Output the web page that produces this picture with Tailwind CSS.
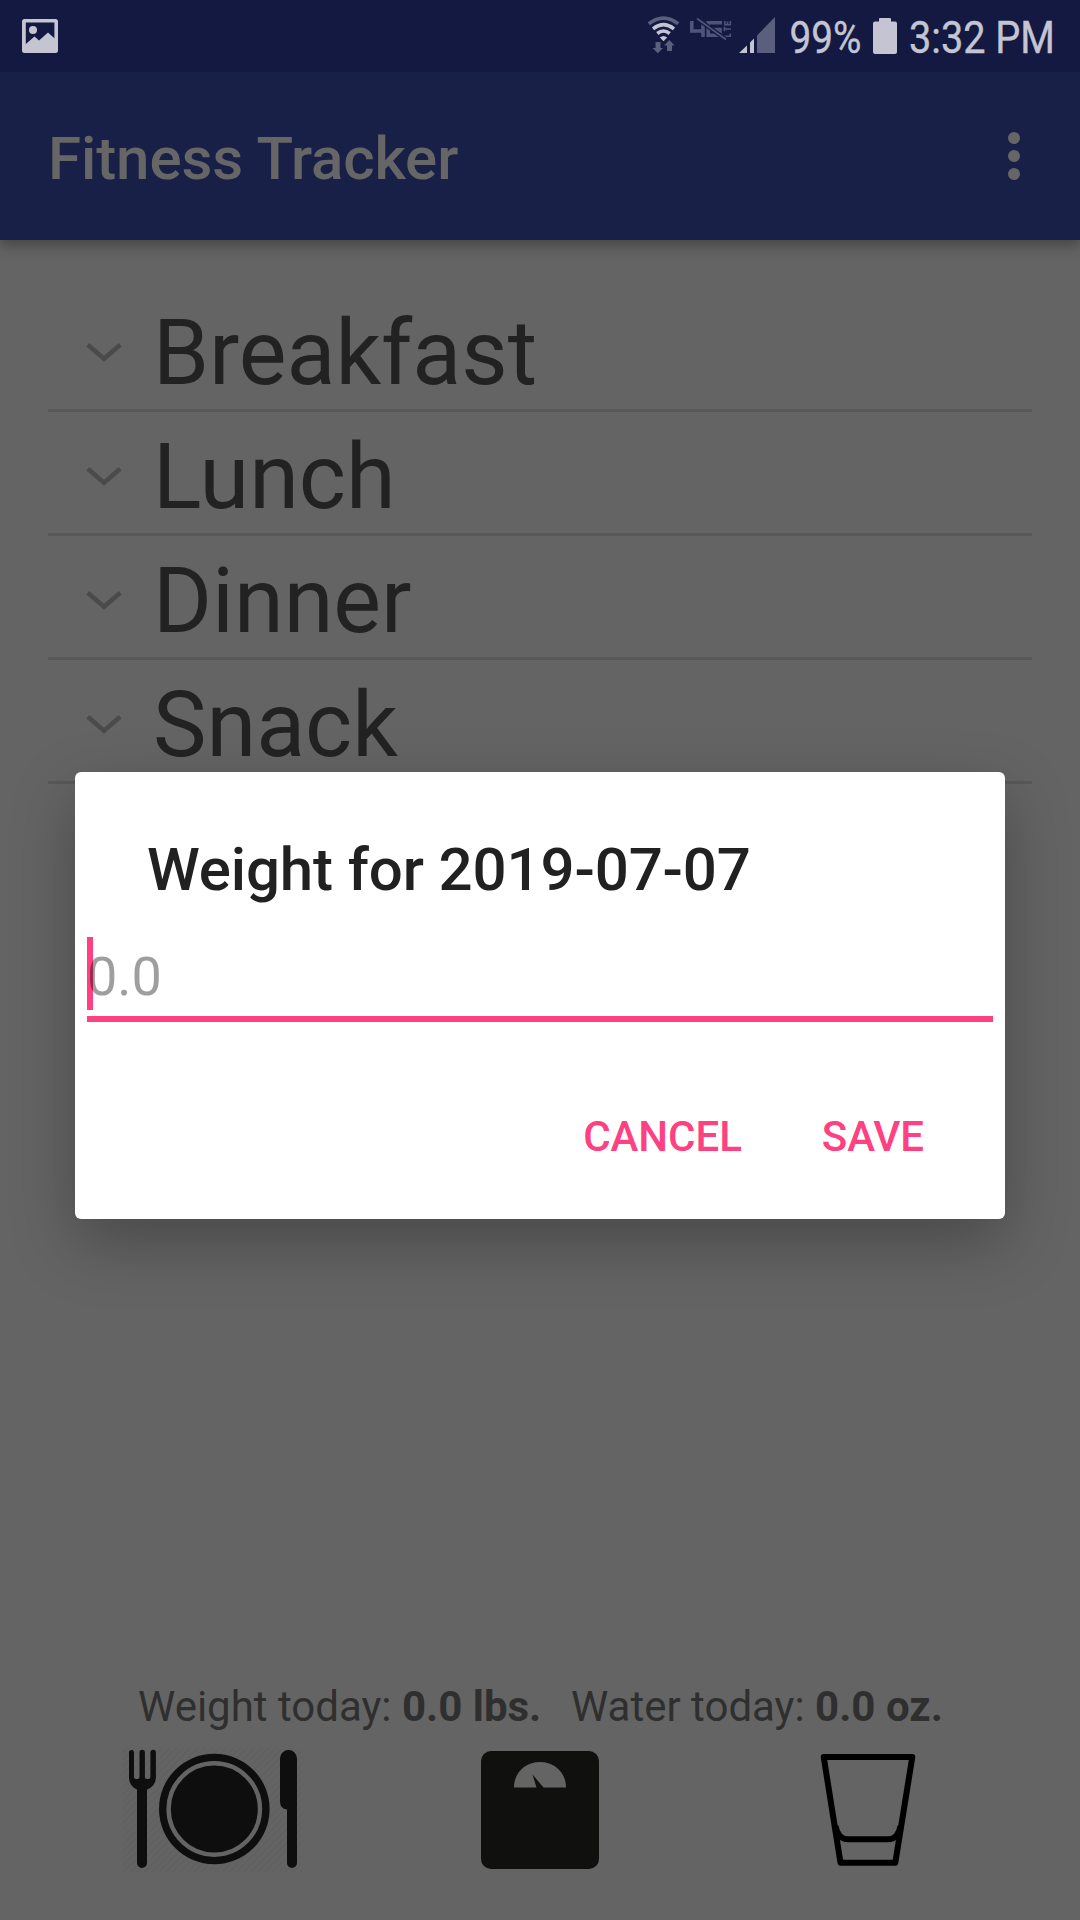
<!DOCTYPE html>
<html lang="en">
<head>
<meta charset="utf-8">
<title>Fitness Tracker</title>
<script src="https://cdn.jsdelivr.net/npm/@tailwindcss/browser@4"></script>
</head>
<body class="relative w-[1080px] h-[1920px] overflow-hidden bg-[#646464] font-['Roboto',sans-serif] flex flex-col">

<!-- Status bar -->
<div class="h-[72px] shrink-0 bg-[#131940] flex items-center justify-between text-[#c4c4d2] relative z-10">
  <svg class="ml-[22px] w-[36px] h-[36px]" viewBox="0 0 36 36"><path fill="#c4c4d2" fill-rule="evenodd" d="M2.500 1H33.500Q36 1 36 3.500V32.500Q36 35 33.500 35H2.500Q0 35 0 32.500V3.500Q0 1 2.500 1ZM3.800 4.500V26L12.500 18.500L17 22.500L26 14.500L32.400 20.300V4.500Z"/><circle cx="11" cy="12" r="4" fill="#c4c4d2"/></svg>
  <div class="flex h-full">
    <svg class="w-[140px] h-[72px]" viewBox="645 0 140 72">
      <g fill="none" stroke-width="3.600">
        <path stroke="#5b5f7e" d="M648.800 23.800Q663.500 12.500 678.200 23.800"/>
        <path stroke="#c4c4d2" d="M653 28.800Q663.500 20.500 674 28.800M657.300 33.500Q663.500 28.500 669.700 33.500"/>
      </g>
      <path fill="#c4c4d2" d="M659.800 37.500Q663.500 34.500 667.200 37.500L663.500 41.200Z"/>
      <path fill="#5b5f7e" d="M655.500 42H660.500V48H663L657.800 53.300L652.500 48H655.500ZM667 51V45.500H664L669.300 40L674.600 45.500H672V51Z"/>
      <g fill="none" stroke="#50547a">
        <path stroke-width="3.600" d="M691.800 21V31H704.500M703 21V37M722 22.800H708.200V35.200H720V29.500H713"/>
        <path stroke-width="1.600" d="M724 36.300H730.300V33.500M724.500 31.300V26.700M724.500 29H731M724.800 21V24.800H730.300V21M727.500 21.500V24.500"/>
        <path stroke="#131940" stroke-width="4.600" d="M697 18.500L726 39.500"/>
        <path stroke-width="1.900" d="M697 18.500L726 39.500"/>
      </g>
      <path fill="#c4c4d2" d="M739 53L747 45.500V53ZM750 42.500L754 38.500V53H750Z"/>
      <path fill="#5b5f7e" d="M757 35.500L775 17V53H757Z"/>
    </svg>
    <svg class="w-[295px] h-[72px]" viewBox="785 0 295 72" stroke="#c4c4d2" stroke-width="0.400">
      <text x="789.500" y="53" font-size="45" fill="#c4c4d2" textLength="72" lengthAdjust="spacingAndGlyphs">99%</text>
      <path fill="#c4c4d2" stroke="none" d="M880 18H890Q891 18 891 19V21.500H895Q897 21.500 897 23.500V52Q897 54 895 54H875Q873 54 873 52V23.500Q873 21.500 875 21.500H879V19Q879 18 880 18Z"/>
      <text x="909" y="53" font-size="45" fill="#c4c4d2" textLength="146" lengthAdjust="spacingAndGlyphs">3:32 PM</text>
    </svg>
  </div>
</div>

<!-- App bar -->
<header class="h-[168px] shrink-0 bg-[#192048] flex items-center justify-between pl-12 pr-[60px] shadow-[0_6px_12px_rgba(0,0,0,0.3)]">
  <h1 class="pt-[5px] text-[60px] leading-[70px] font-medium tracking-[-0.08px] text-[#666666]">Fitness Tracker</h1>
  <div class="flex flex-col gap-[6px]">
    <span class="size-3 rounded-full bg-[#666666]"></span>
    <span class="size-3 rounded-full bg-[#666666]"></span>
    <span class="size-3 rounded-full bg-[#666666]"></span>
  </div>
</header>

<!-- Meals -->
<main class="grow px-12 pt-12">
  <ul class="text-[90px] leading-[105px] text-[#222222]">
    <li class="h-[124px] border-b-[3px] border-[#585858] flex items-center pl-[38px]">
      <svg class="w-9 h-[19px] mt-[7px]" viewBox="0 0 36 19" fill="none" stroke="#4b4b4b" stroke-width="4.600"><path d="M1.800 1.800L18 15.800L34.200 1.800"/></svg>
      <span class="ml-[31px] pt-[10px]">Breakfast</span>
    </li>
    <li class="h-[124px] border-b-[3px] border-[#585858] flex items-center pl-[38px]">
      <svg class="w-9 h-[19px] mt-[7px]" viewBox="0 0 36 19" fill="none" stroke="#4b4b4b" stroke-width="4.600"><path d="M1.800 1.800L18 15.800L34.200 1.800"/></svg>
      <span class="ml-[31px] pt-[10px]">Lunch</span>
    </li>
    <li class="h-[124px] border-b-[3px] border-[#585858] flex items-center pl-[38px]">
      <svg class="w-9 h-[19px] mt-[7px]" viewBox="0 0 36 19" fill="none" stroke="#4b4b4b" stroke-width="4.600"><path d="M1.800 1.800L18 15.800L34.200 1.800"/></svg>
      <span class="ml-[31px] pt-[10px]">Dinner</span>
    </li>
    <li class="h-[124px] border-b-[3px] border-[#585858] flex items-center pl-[38px]">
      <svg class="w-9 h-[19px] mt-[7px]" viewBox="0 0 36 19" fill="none" stroke="#4b4b4b" stroke-width="4.600"><path d="M1.800 1.800L18 15.800L34.200 1.800"/></svg>
      <span class="ml-[31px] pt-[10px]">Snack</span>
    </li>
  </ul>
</main>

<!-- Daily totals and actions -->
<footer class="h-[238px] shrink-0">
  <div class="flex pl-[138px] text-[42px] leading-[50px] text-[#2f2f2f] whitespace-nowrap">
    <p class="w-[433px]">Weight today: <b>0.0 lbs.</b></p>
    <p>Water today: <b>0.0 oz.</b></p>
  </div>
  <div class="flex pl-[123px] pt-[16px]">
    <svg class="w-[179px] h-[124px]" viewBox="123 1748 179 124">
      <defs><pattern id="hatch" width="5" height="5" patternUnits="userSpaceOnUse" patternTransform="rotate(45)"><path d="M1 0V5" stroke="#5f5f5f" stroke-width="1.400"/></pattern></defs>
      <rect x="123" y="1748" width="179" height="124" fill="url(#hatch)"/>
      <g fill="#0e0e0e">
        <path d="M129 1752.500a2.500 2.500 0 0 1 5 0V1777q0 2 2 2h1.500q2 0 2-2V1752.500a2.700 2.700 0 0 1 5.400 0V1777q0 2 2 2h1.500q2 0 2-2V1752.500a2.700 2.700 0 0 1 5.500 0V1777q0 9-8.900 12.500V1863a5 5 0 0 1-10 0V1789.500Q129 1786 129 1777Z"/>
        <circle cx="214.300" cy="1809" r="55.300"/>
        <path d="M280 1758.500a8.500 8.500 0 0 1 17 0V1863a5 5 0 0 1-10 0V1809.500q-7-1-7-8Z"/>
      </g>
      <circle cx="214.300" cy="1809" r="45.700" fill="none" stroke="#646464" stroke-width="4.400"/>
    </svg>
    <svg class="ml-[179px] w-[118px] h-[124px]" viewBox="481 1748 118 124">
      <rect x="481" y="1751" width="118" height="118" rx="10" fill="#10110f"/>
      <path fill="#646464" d="M514 1787.500C514 1772 526 1762 540 1762S566 1772 566 1787.500H543.500L532.500 1774.500L536.500 1787.500Z"/>
    </svg>
    <svg class="ml-[220px] w-[98px] h-[124px]" viewBox="819 1748 98 124" fill="none" stroke="#000" stroke-width="6" stroke-linejoin="round">
      <path d="M823.700 1757H912.300L895.300 1862.800H840.500Z" stroke="none"/>
      <path d="M823.700 1757H912.300L895.300 1862.800H840.500Z"/>
      <path d="M835.500 1826Q838 1839.200 848 1839.200H888Q898 1839.200 900.500 1826"/>
    </svg>
  </div>
</footer>

<!-- Weight dialog -->
<section class="absolute z-20 left-[75px] top-[772px] w-[930px] h-[447px] rounded-[6px] bg-white shadow-[0_24px_64px_rgba(0,0,0,0.27)] flex flex-col">
  <h2 class="pl-[72px] pt-[63px] text-[60px] leading-[70px] font-medium tracking-[-0.13px] text-[#212121]">Weight for 2019-07-07</h2>
  <div class="relative mx-3 mt-8 h-[85px] border-b-[6px] border-[#ff4081]">
    <div class="absolute left-0 top-0 w-[6px] h-[73px] bg-[#ff4081]"></div>
    <p class="relative pt-[3px] text-[54px] leading-[73px] text-black/38">0.0</p>
  </div>
  <div class="flex justify-end gap-20 pr-[81px] pt-[90px] text-[42px] leading-[50px] font-medium tracking-[-0.05px] text-[#ff4081]">
    <button>CANCEL</button>
    <button>SAVE</button>
  </div>
</section>
</body>
</html>
